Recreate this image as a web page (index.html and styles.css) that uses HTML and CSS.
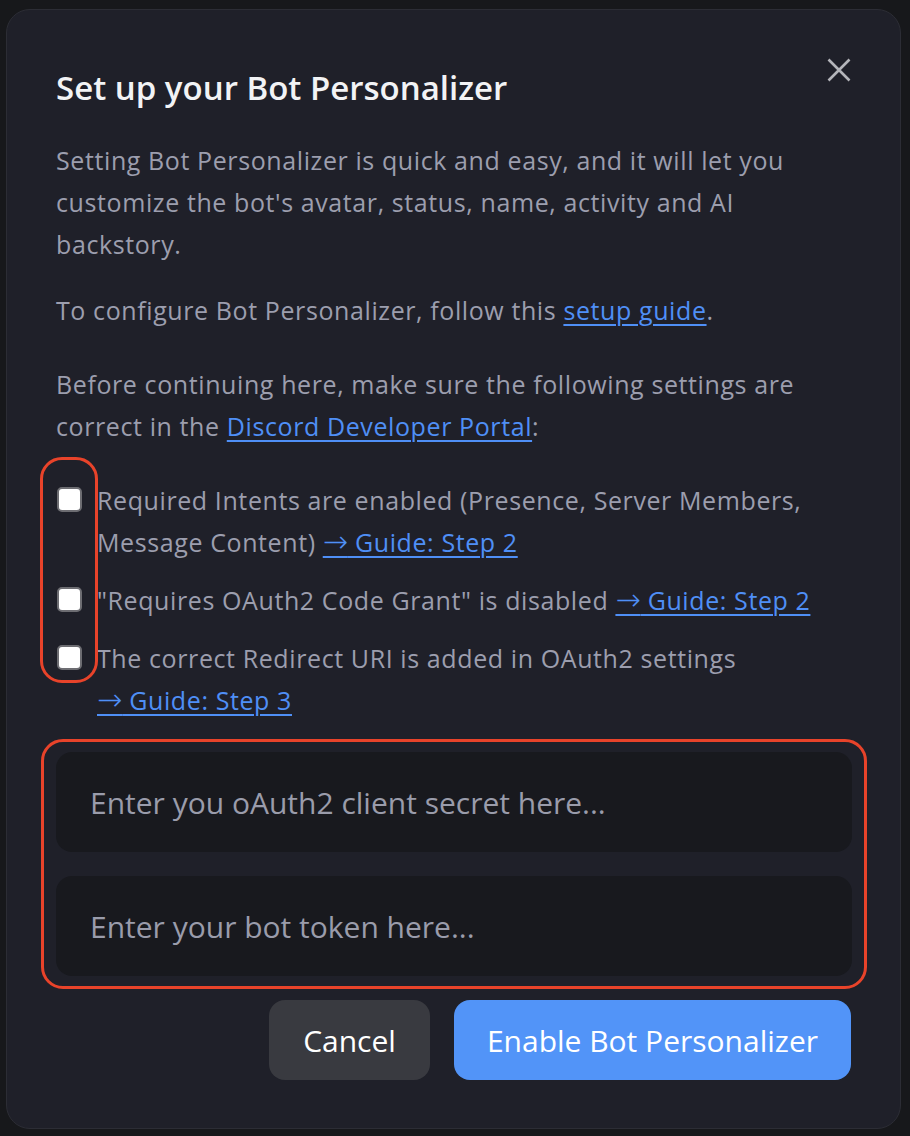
FILE: index.html
```html
<!DOCTYPE html>
<html lang="en">
<head>
<meta charset="utf-8">
<title>Set up your Bot Personalizer</title>
<link rel="stylesheet" href="styles.css">
</head>
<body>
<div class="modal">
  <div class="header">
    <h1 class="title">Set up your Bot Personalizer</h1>
    <button class="close" aria-label="Close">
      <svg width="24" height="24" viewBox="0 0 24 24"><path d="M1.5 1.5L22.5 22.5M22.5 1.5L1.5 22.5" stroke="#b4b5ba" stroke-width="2.6" stroke-linecap="butt" fill="none"/></svg>
    </button>
  </div>
  <p class="text p1">Setting Bot Personalizer is quick and easy, and it will let you customize the bot's avatar, status, name, activity and AI backstory.</p>
  <p class="text p2">To configure Bot Personalizer, follow this <a href="#">setup guide</a>.</p>
  <p class="text p3">Before continuing here, make sure the following settings are correct in the <a href="#">Discord Developer Portal</a>:</p>
  <div class="checks">
    <span class="mark mark-checks"></span>
    <label class="check"><input type="checkbox" class="box"><span>Required Intents are enabled (Presence, Server Members, Message Content) <a href="#" class="guide"><span class="arrow">→</span> Guide: Step 2</a></span></label>
    <label class="check"><input type="checkbox" class="box"><span>"Requires OAuth2 Code Grant" is disabled <a href="#" class="guide"><span class="arrow">→</span> Guide: Step 2</a></span></label>
    <label class="check"><input type="checkbox" class="box"><span>The correct Redirect URI is added in OAuth2 settings <a href="#" class="guide"><span class="arrow">→</span> Guide: Step 3</a></span></label>
  </div>
  <div class="fields">
    <span class="mark mark-fields"></span>
    <input class="field" type="text" placeholder="Enter you oAuth2 client secret here...">
    <input class="field" type="text" placeholder="Enter your bot token here...">
  </div>
  <div class="actions">
    <button class="btn btn-cancel">Cancel</button>
    <button class="btn btn-primary">Enable Bot Personalizer</button>
  </div>
</div>
</body>
</html>
```

FILE: styles.css
```css
* { box-sizing: border-box; }
html, body {
  margin: 0;
  padding: 0;
  background: #17181b;
}
body {
  width: 910px;
  height: 1136px;
  overflow: hidden;
  padding: 9px 9px 7px 6px;
  font-family: "Open Sans", "Noto Sans", sans-serif;
}
.modal {
  width: 895px;
  height: 1120px;
  background: #1f2029;
  border: 1px solid #2c2d35;
  border-radius: 24px;
  padding: 46px 49px 48px 49px;
  display: flex;
  flex-direction: column;
}
.header {
  display: flex;
  justify-content: space-between;
  align-items: flex-start;
}
.title {
  margin: 0;
  font-size: 33px;
  line-height: 40px;
  font-weight: 600;
  color: #f2f3f5;
  margin-top: 12px;
}
.close {
  background: none;
  border: none;
  padding: 0;
  width: 24px;
  height: 24px;
  margin-top: 2px;
  margin-right: 0;
  cursor: pointer;
}
.close svg { display: block; }
.text {
  margin: 0;
  font-size: 25px;
  line-height: 42px;
  letter-spacing: 0.6px;
  color: #9c9eae;
}
.p1 { margin-top: 31px; }
.p2 { margin-top: 24px; }
.p3 { margin-top: 32px; }
a {
  color: #4f8ff6;
  text-decoration: underline;
  text-underline-offset: 4px;
  text-decoration-thickness: 2px;
}
.guide { white-space: nowrap; }
.arrow {
  font-family: "DejaVu Sans", sans-serif;
  font-size: 30px;
  line-height: 0;
  letter-spacing: 0;
  font-weight: 300;
}
.checks {
  position: relative;
  margin-top: 32px;
  display: flex;
  flex-direction: column;
  gap: 16px;
}
.check {
  display: flex;
  align-items: flex-start;
  gap: 15px;
  font-size: 25px;
  line-height: 42px;
  letter-spacing: 0.6px;
  color: #9c9eae;
}
.check > span { display: block; }
.box {
  appearance: none;
  -webkit-appearance: none;
  flex: none;
  width: 25px;
  height: 25px;
  margin: 8px 0 0 1px;
  background: #ffffff;
  border: 2px solid #6d6d72;
  border-radius: 5px;
}
.mark {
  position: absolute;
  border: 3px solid #e8432a;
  border-radius: 22px;
  pointer-events: none;
}
.mark-checks {
  left: -16px;
  top: -22px;
  width: 58px;
  height: 226px;
}
.fields {
  position: relative;
  margin-top: 31px;
  display: flex;
  flex-direction: column;
  gap: 24px;
}
.mark-fields {
  left: -15px;
  top: -13px;
  width: 826px;
  height: 250px;
}
.field {
  display: block;
  width: 796px;
  height: 100px;
  border: none;
  outline: none;
  border-radius: 16px;
  background: #18191e;
  padding: 0 34px;
  font-family: "Open Sans", "Noto Sans", sans-serif;
  font-size: 30px;
  color: #e0e1e5;
}
.field::placeholder { color: #9a9cab; }
.actions {
  margin-top: 24px;
  display: flex;
  justify-content: flex-end;
  gap: 24px;
}
.btn {
  height: 80px;
  border: none;
  border-radius: 16px;
  font-family: "Open Sans", "Noto Sans", sans-serif;
  font-size: 30px;
  font-weight: 500;
  color: #ffffff;
  cursor: pointer;
}
.btn-cancel { background: #393a40; padding: 0 34px; }
.btn-primary { background: #5294f8; padding: 0 33px; }
```
